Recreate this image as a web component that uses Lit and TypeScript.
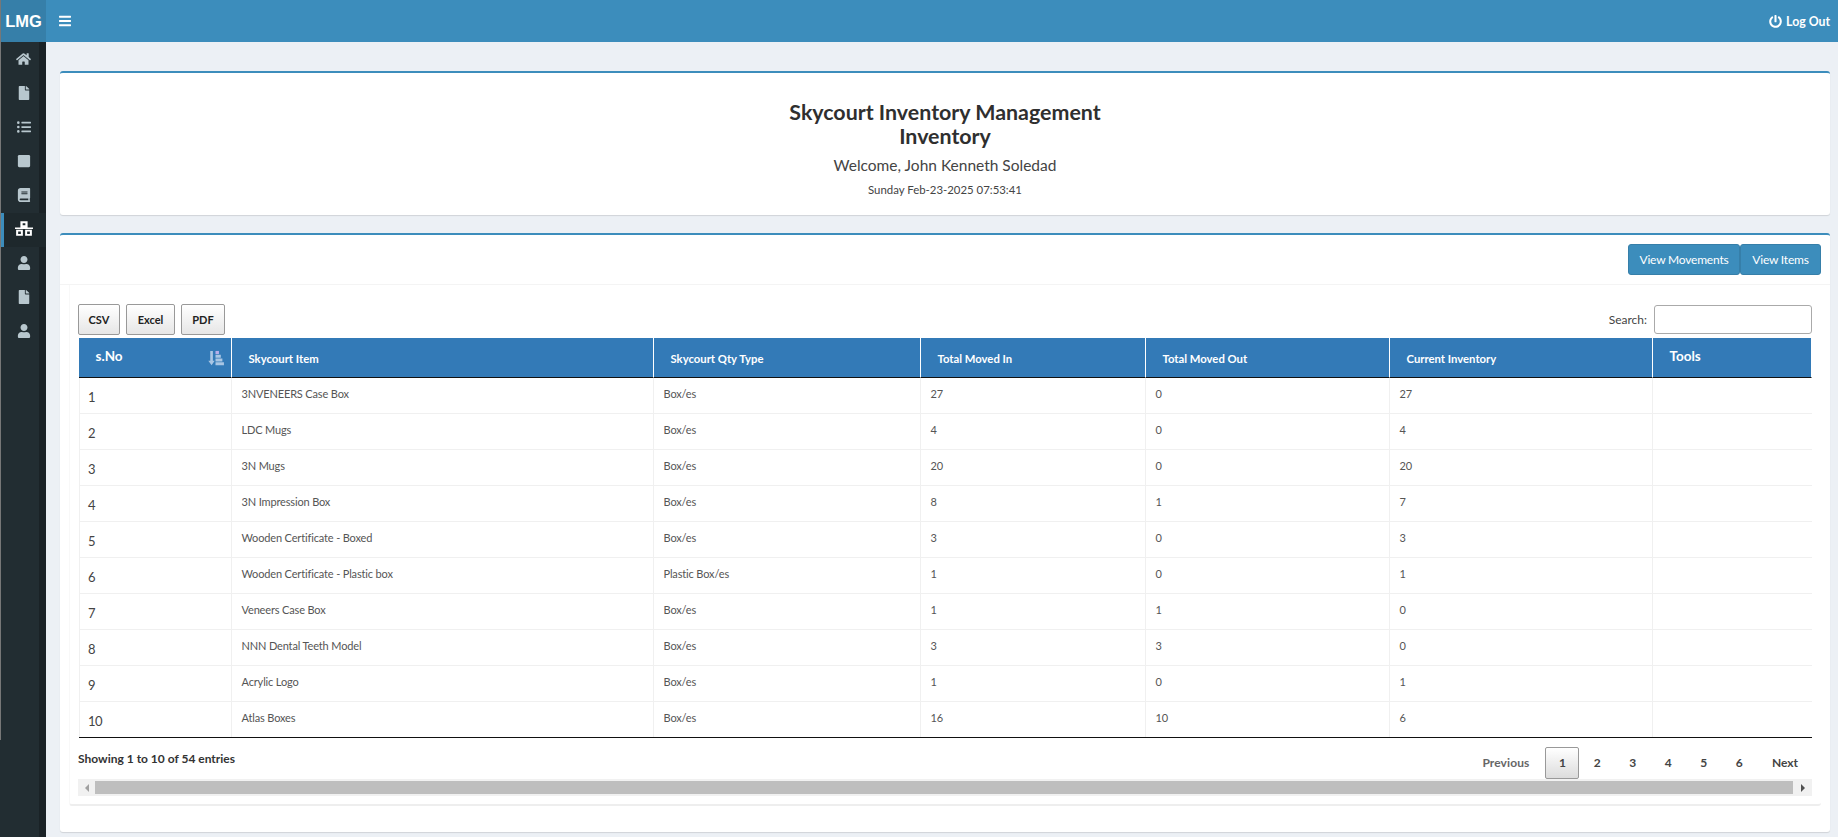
import { LitElement, html, css, svg } from "lit";
import { customElement } from "lit/decorators.js";

const P = {
  home: ["0 0 576 512", "M280.37 148.26L96 300.11V464a16 16 0 0 0 16 16l112.06-.29a16 16 0 0 0 15.92-16V368a16 16 0 0 1 16-16h64a16 16 0 0 1 16 16v95.64a16 16 0 0 0 16 16.05L464 480a16 16 0 0 0 16-16V300L295.67 148.26a12.19 12.19 0 0 0-15.3 0zM571.6 251.47L488 182.56V44.05a12 12 0 0 0-12-12h-56a12 12 0 0 0-12 12v72.61L318.47 43a48 48 0 0 0-61 0L4.34 251.47a12 12 0 0 0-1.6 16.9l25.5 31A12 12 0 0 0 45.15 301l235.22-193.74a12.19 12.19 0 0 1 15.3 0L530.9 301a12 12 0 0 0 16.9-1.6l25.5-31a12 12 0 0 0-1.7-16.93z"],
  file: ["0 0 384 512", "M224 136V0H24C10.7 0 0 10.7 0 24v464c0 13.3 10.7 24 24 24h336c13.3 0 24-10.7 24-24V160H248c-13.2 0-24-10.8-24-24zm160-14.1v6.1H256V0h6.1c6.4 0 12.5 2.5 17 7l97.9 98c4.5 4.5 7 10.6 7 16.9z"],
  list: ["0 0 512 512", "M48 48a48 48 0 1 0 48 48 48 48 0 0 0-48-48zm0 160a48 48 0 1 0 48 48 48 48 0 0 0-48-48zm0 160a48 48 0 1 0 48 48 48 48 0 0 0-48-48zm448 16H176a16 16 0 0 0-16 16v32a16 16 0 0 0 16 16h320a16 16 0 0 0 16-16v-32a16 16 0 0 0-16-16zm0-320H176a16 16 0 0 0-16 16v32a16 16 0 0 0 16 16h320a16 16 0 0 0 16-16V80a16 16 0 0 0-16-16zm0 160H176a16 16 0 0 0-16 16v32a16 16 0 0 0 16 16h320a16 16 0 0 0 16-16v-32a16 16 0 0 0-16-16z"],
  square: ["0 0 448 512", "M400 32H48C21.5 32 0 53.5 0 80v352c0 26.5 21.5 48 48 48h352c26.5 0 48-21.5 48-48V80c0-26.5-21.5-48-48-48z"],
  book: ["0 0 448 512", "M448 360V24c0-13.3-10.7-24-24-24H96C43 0 0 43 0 96v320c0 53 43 96 96 96h328c13.3 0 24-10.7 24-24v-16c0-7.5-3.5-14.3-8.9-18.7-4.2-15.4-4.2-59.3 0-74.7 5.4-4.3 8.9-11.1 8.9-18.6zM128 134c0-3.3 2.7-6 6-6h212c3.3 0 6 2.7 6 6v20c0 3.3-2.7 6-6 6H134c-3.3 0-6-2.7-6-6v-20zm0 64c0-3.3 2.7-6 6-6h212c3.3 0 6 2.7 6 6v20c0 3.3-2.7 6-6 6H134c-3.3 0-6-2.7-6-6v-20zm253.4 250H96c-17.7 0-32-14.3-32-32 0-17.6 14.4-32 32-32h285.4c-1.9 17.1-1.9 46.9 0 64z"],
  user: ["0 0 448 512", "M224 256c70.7 0 128-57.3 128-128S294.7 0 224 0 96 57.3 96 128s57.3 128 128 128zm89.6 32h-16.7c-22.2 10.2-46.9 16-72.9 16s-50.6-5.8-72.9-16h-16.7C60.2 288 0 348.2 0 422.4V464c0 26.5 21.5 48 48 48h352c26.5 0 48-21.5 48-48v-41.6c0-74.2-60.2-134.4-134.4-134.4z"],
  sitemap: ["0 0 640 512", "M192 0h256v216H192zM272 72v72h96V72zM0 220h640v50H0zM40 300h240v212H40zm72 64v84h96v-84zM360 300h240v212H360zm72 64v84h96v-84z"],
  bars: ["0 0 448 512", "M16 132h416c8.837 0 16-7.163 16-16V76c0-8.837-7.163-16-16-16H16C7.163 60 0 67.163 0 76v40c0 8.837 7.163 16 16 16zm0 160h416c8.837 0 16-7.163 16-16v-40c0-8.837-7.163-16-16-16H16c-8.837 0-16 7.163-16 16v40c0 8.837 7.163 16 16 16zm0 160h416c8.837 0 16-7.163 16-16v-40c0-8.837-7.163-16-16-16H16c-8.837 0-16 7.163-16 16v40c0 8.837 7.163 16 16 16z"],
  power: ["0 0 512 512", "M400 54.1c63 45 104 118.6 104 201.9 0 136.8-110.8 247.7-247.5 248C120 504.3 8.2 393 8 256.4 7.9 173.1 48.9 99.3 111.8 54.2c11.7-8.3 28-4.8 35 7.7L162.6 90c5.9 10.5 3.1 23.8-6.6 31-41.5 30.8-68 79.6-68 134.9-.1 92.3 74.5 168.1 168 168.1 91.6 0 168.6-74.2 168-169.1-.3-51.8-24.7-101.8-68.1-134-9.7-7.2-12.4-20.5-6.5-30.9l15.8-28.1c7-12.4 23.2-16.1 34.8-7.8zM296 264V24c0-13.3-10.7-24-24-24h-32c-13.3 0-24 10.7-24 24v240c0 13.3 10.7 24 24 24h32c13.3 0 24-10.7 24-24z"],
} as const;

const icon = (n: keyof typeof P, cls = "") =>
  html`<svg class="ic ${cls}" viewBox=${P[n][0]} fill="currentColor">${svg`<path d=${P[n][1]}></path>`}</svg>`;

const sortIcon = html`<svg class="ic sorti" viewBox="0 0 512 512">
  <path fill="#a9c6e4" d="M72 30h84v310h58L114 490 10 340h62z"></path>
  <path fill="#b7aeea" d="M240 30h110v100H240z"></path>
  <path fill="#a9c6e4" d="M240 150h170v100H240zM240 270h220v100H240zM240 390h270v100H240z"></path>
</svg>`;

const NAV: (keyof typeof P)[] = ["home", "file", "list", "square", "book", "sitemap", "user", "file", "user"];
const ROWS = [
  ["1", "3NVENEERS Case Box", "Box/es", "27", "0", "27"],
  ["2", "LDC Mugs", "Box/es", "4", "0", "4"],
  ["3", "3N Mugs", "Box/es", "20", "0", "20"],
  ["4", "3N Impression Box", "Box/es", "8", "1", "7"],
  ["5", "Wooden Certificate - Boxed", "Box/es", "3", "0", "3"],
  ["6", "Wooden Certificate - Plastic box", "Plastic Box/es", "1", "0", "1"],
  ["7", "Veneers Case Box", "Box/es", "1", "1", "0"],
  ["8", "NNN Dental Teeth Model", "Box/es", "3", "3", "0"],
  ["9", "Acrylic Logo", "Box/es", "1", "0", "1"],
  ["10", "Atlas Boxes", "Box/es", "16", "10", "6"],
];

@customElement("app-root")
export class AppRoot extends LitElement {
  static styles = css`
    :host { display: block; width: 1838px; height: 837px; overflow: hidden; background: #ecf0f5; font-family: "Lato", "Noto Sans", sans-serif; color: #333; }
    * { box-sizing: border-box; }
    .ic { display: block; }
    .top { display: flex; height: 42px; background: #3c8dbc; color: #fff; align-items: center; }
    .logo { width: 46px; height: 42px; background: #367fa9; display: flex; align-items: center; justify-content: center; font: 700 16.5px "Liberation Sans", sans-serif; border-left: 1px solid #777; }
    .burger { width: 12px; height: 14px; margin-left: 13px; }
    .logout { margin-left: auto; margin-right: 8px; display: flex; align-items: center; gap: 4px; font-weight: 700; font-size: 12.3px; }
    .logout .ic { width: 13px; height: 13px; }
    .body { display: flex; height: 795px; }
    .side { width: 46px; flex: none; background: #222d32; border-right: 7px solid #1a2226; display: flex; flex-direction: column; padding-top: 1px; position: relative; }
    .side::before { content: ""; position: absolute; left: 0; top: 0; width: 1px; height: 698px; background: #777; }
    .nav { height: 34px; display: flex; align-items: center; justify-content: center; color: #b8c7ce; padding: 0 0 3px 8px; }
    .nav .ic { width: 14px; height: 14px; }
    .nav.home .ic { width: 15px; height: 14px; }
    .nav.on { background: #1e282c; color: #fff; border-left: 3px solid #3c8dbc; margin-left: 1px; margin-right: -7px; padding: 0 7px 3px 4px; }
    .nav.on .ic { width: 18px; height: 15px; }
    .main { flex: 1; padding: 29px 8px 0 14px; display: flex; flex-direction: column; gap: 18px; }
    .box { background: #fff; border-top: 2px solid #3c8dbc; border-radius: 3px; box-shadow: 0 1px 1px rgba(0, 0, 0, 0.12); }
    .hero { height: 144px; text-align: center; padding-top: 27px; }
    h1 { margin: 0; font-size: 21.4px; line-height: 24px; font-weight: 700; color: #2f2f2f; }
    .wel { font-size: 15.5px; line-height: 20px; margin-top: 7px; color: #444; }
    .dt { font-size: 11.4px; line-height: 16px; margin-top: 7px; color: #444; }
    .card { height: 599px; display: flex; flex-direction: column; }
    .chead { height: 50px; border-bottom: 1px solid #f4f4f4; display: flex; justify-content: flex-end; padding: 9px 9px 0 0; }
    .vb { height: 31px; background: #3c8dbc; border: 1px solid #367fa9; color: #fff; border-radius: 3px; font-size: 12px; letter-spacing: -0.2px; display: flex; align-items: center; justify-content: center; }
    .vb.a { width: 112px; }
    .vb.b { width: 81px; }
    .inner { margin: 0 9px; padding: 18px 9px 0 9px; height: 521px; border-bottom: 2px solid #eeeeee; border-left: 1px solid #f8f8f8; border-radius: 0 0 3px 3px; display: flex; flex-direction: column; }
    .tools { display: flex; align-items: center; height: 32px; margin: 0 0 3px -1px; }
    .xb { height: 31px; border: 1px solid #999; border-radius: 2px; background: linear-gradient(#fff, #e6e6e6); font-weight: 700; font-size: 11px; color: #222; display: flex; align-items: center; justify-content: center; margin-right: 6px; }
    .xb.c { width: 42px; }
    .xb.e { width: 49px; }
    .xb.p { width: 44px; }
    .search { margin-left: auto; display: flex; align-items: center; gap: 7px; font-size: 12px; color: #444; }
    .search i { display: block; width: 158px; height: 29px; border: 1px solid #aaa; border-radius: 3px; background: #fff; }
    .table { display: grid; grid-template-columns: 153px 422px 267px 225px 244px 263px 159px; width: 1733px; }
    .th { height: 40px; background: #337ab7; color: #fff; border-bottom: 1px solid #111; border-right: 1px solid #fff; font-weight: 700; font-size: 11.3px; display: flex; align-items: center; padding-left: 16.5px; position: relative; padding-top: 2px; }
    .th.big { font-size: 13.5px; align-items: flex-start; padding-top: 10px; }
    .th:last-child { border-right: 0; }
    .sorti { position: absolute; right: 7px; top: 12px; width: 16px; height: 16px; }
    .td { height: 36px; border-bottom: 1px solid #f0f0f0; border-right: 1px solid #f0f0f0; font-size: 11px; letter-spacing: -0.15px; color: #555; padding: 8px 0 0 9.5px; line-height: 16px; }
    .td.n { font-size: 13px; letter-spacing: -0.5px; padding: 11px 0 0 8px; color: #444; border-left: 1px solid #f0f0f0; }
    .td.z { border-right: 0; }
    .td.last { border-bottom: 0; height: 35px; }
    .foot { border-top: 1px solid #111; display: flex; justify-content: space-between; height: 42px; width: 1733px; }
    .info { font-weight: 700; font-size: 12px; padding-top: 13px; margin-left: -1px; color: #333; }
    .pager { display: flex; align-items: center; font-weight: 700; font-size: 12px; color: #444; padding-top: 8px; padding-right: 14px; height: 41px; }
    .pg { min-width: 35.5px; height: 32px; display: flex; align-items: center; justify-content: center; }
    .pg.cur { border: 1px solid #999; border-radius: 2px; background: linear-gradient(#fff, #dcdcdc); min-width: 34px; }
    .pg.t { padding: 0 16px 0 0; color: #666; letter-spacing: 0.1px; }
    .pg.nx { padding: 0 0 0 15px; }
    .sb { height: 17px; width: 1734px; margin-left: -1px; background: #f1f1f1; display: flex; align-items: center; }
    .sb .arr { width: 17px; height: 17px; display: flex; align-items: center; justify-content: center; flex: none; }
    .sb .arr.rt { width: 19px; }
    .sb .th2 { flex: 1; height: 13px; background: #bebebe; }
    .l { width: 0; height: 0; border: 4px solid transparent; border-right-color: #a0a0a0; border-left: 0; }
    .r { width: 0; height: 0; border: 4px solid transparent; border-left-color: #505050; border-right: 0; }
  `;

  render() {
    const heads = ["Skycourt Item", "Skycourt Qty Type", "Total Moved In", "Total Moved Out", "Current Inventory"];
    return html`
      <div class="top">
        <div class="logo">LMG</div>
        ${icon("bars", "burger")}
        <div class="logout">${icon("power")}<span>Log Out</span></div>
      </div>
      <div class="body">
        <nav class="side">
          ${NAV.map((n, i) => html`<div class="nav ${i === 5 ? "on" : ""} ${n}">${icon(n)}</div>`)}
        </nav>
        <main class="main">
          <section class="box hero">
            <h1>Skycourt Inventory Management<br />Inventory</h1>
            <div class="wel">Welcome, John Kenneth Soledad</div>
            <div class="dt">Sunday Feb-23-2025 07:53:41</div>
          </section>
          <section class="box card">
            <div class="chead">
              <div class="vb a">View Movements</div>
              <div class="vb b">View Items</div>
            </div>
            <div class="inner">
              <div class="tools">
                <div class="xb c">CSV</div>
                <div class="xb e">Excel</div>
                <div class="xb p">PDF</div>
                <div class="search"><span>Search:</span><i></i></div>
              </div>
              <div class="table">
                <div class="th big">s.No${sortIcon}</div>
                ${heads.map((h) => html`<div class="th">${h}</div>`)}
                <div class="th big">Tools</div>
                ${ROWS.map((r, i) => html`
                  ${r.map((c, j) => html`<div class="td ${j === 0 ? "n" : ""} ${i === 9 ? "last" : ""}">${c}</div>`)}
                  <div class="td z ${i === 9 ? "last" : ""}"></div>
                `)}
              </div>
              <div class="foot">
                <div class="info">Showing 1 to 10 of 54 entries</div>
                <div class="pager">
                  <div class="pg t">Previous</div>
                  <div class="pg cur">1</div>
                  ${["2", "3", "4", "5", "6"].map((p) => html`<div class="pg">${p}</div>`)}
                  <div class="pg nx">Next</div>
                </div>
              </div>
              <div class="sb">
                <div class="arr"><div class="l"></div></div>
                <div class="th2"></div>
                <div class="arr rt"><div class="r"></div></div>
              </div>
            </div>
          </section>
        </main>
      </div>
    `;
  }
}
